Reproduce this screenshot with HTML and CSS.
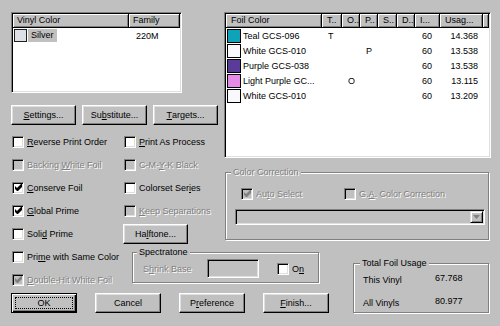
FILE: index.html
```html
<!DOCTYPE html>
<html lang="en">

<head>
    <meta charset="UTF-8">
    <title>Foil Settings</title>
    <link rel="stylesheet" href="styles.css">
</head>

<body>
    <div class="dialog">
        <div class="top">
            <div class="left">
                <!-- vinyl list -->
                <div class="list vinyl-list">
                    <div class="list-head">
                        <div class="hcell">Vinyl Color</div>
                        <div class="hcell">Family</div>
                    </div>
                    <div class="list-row">
                        <div class="name"><span class="swatch silver"></span><span class="sel">Silver</span></div>
                        <div class="cell">220M</div>
                    </div>
                </div>

                <div class="top-buttons">
                    <div class="btn"><u>S</u>ettings...</div>
                    <div class="btn">Su<u>b</u>stitute...</div>
                    <div class="btn"><u>T</u>argets...</div>
                </div>

                <div class="options">
                    <div class="check"><span class="box"></span><span><u>R</u>everse Print Order</span></div>
                    <div class="check"><span class="box"></span><span><u>P</u>rint As Process</span></div>
                    <div class="check disabled"><span class="box off"></span><span>Backing <u>W</u>hite Foil</span></div>
                    <div class="check disabled"><span class="box off"></span><span>C-M-<u>Y</u>-K Black</span></div>
                    <div class="check"><span class="box"><svg class="tick" width="7" height="7" viewBox="0 0 7 7"><polygon points="0,2 2,4 6,0 7,0 7,3 3,7 2,7 0,5"/></svg></span><span><u>C</u>onserve Foil</span></div>
                    <div class="check"><span class="box"></span><span>Colorset Ser<u>i</u>es</span></div>
                    <div class="check"><span class="box"><svg class="tick" width="7" height="7" viewBox="0 0 7 7"><polygon points="0,2 2,4 6,0 7,0 7,3 3,7 2,7 0,5"/></svg></span><span><u>G</u>lobal Prime</span></div>
                    <div class="check disabled"><span class="box off"></span><span><u>K</u>eep Separations</span></div>
                    <div class="check"><span class="box"></span><span>Soli<u>d</u> Prime</span></div>
                    <div class="btn halftone">Ha<u>l</u>ftone...</div>
                </div>
            </div>

            <div class="right">
                <!-- foil list -->
                <div class="list foil-list">
                    <div class="list-head">
                        <div class="hcell">Foil Color</div>
                        <div class="hcell">T..</div>
                        <div class="hcell">O..</div>
                        <div class="hcell">P..</div>
                        <div class="hcell">S..</div>
                        <div class="hcell">D..</div>
                        <div class="hcell">I...</div>
                        <div class="hcell">Usag...</div>
                        <div class="hcell"></div>
                    </div>
                    <div class="list-row">
                        <div class="name"><span class="swatch teal"></span>Teal GCS-096</div>
                        <div class="cell">T</div>
                        <div class="cell"></div>
                        <div class="cell"></div>
                        <div class="cell"></div>
                        <div class="cell"></div>
                        <div class="cell num">60</div>
                        <div class="cell usage">14.368</div>
                    </div>
                    <div class="list-row">
                        <div class="name"><span class="swatch white"></span>White GCS-010</div>
                        <div class="cell"></div>
                        <div class="cell"></div>
                        <div class="cell">P</div>
                        <div class="cell"></div>
                        <div class="cell"></div>
                        <div class="cell num">60</div>
                        <div class="cell usage">13.538</div>
                    </div>
                    <div class="list-row">
                        <div class="name"><span class="swatch purple"></span>Purple GCS-038</div>
                        <div class="cell"></div>
                        <div class="cell"></div>
                        <div class="cell"></div>
                        <div class="cell"></div>
                        <div class="cell"></div>
                        <div class="cell num">60</div>
                        <div class="cell usage">13.538</div>
                    </div>
                    <div class="list-row">
                        <div class="name"><span class="swatch light-purple"></span>Light Purple GC...</div>
                        <div class="cell"></div>
                        <div class="cell">O</div>
                        <div class="cell"></div>
                        <div class="cell"></div>
                        <div class="cell"></div>
                        <div class="cell num">60</div>
                        <div class="cell usage">13.115</div>
                    </div>
                    <div class="list-row">
                        <div class="name"><span class="swatch white"></span>White GCS-010</div>
                        <div class="cell"></div>
                        <div class="cell"></div>
                        <div class="cell"></div>
                        <div class="cell"></div>
                        <div class="cell"></div>
                        <div class="cell num">60</div>
                        <div class="cell usage">13.209</div>
                    </div>
                </div>

                <div class="group cc">
                    <div class="group-title disabled">Color Correction</div>
                    <div class="cc-row">
                        <div class="check disabled auto"><span class="box off"><svg class="tick" width="7" height="7" viewBox="0 0 7 7"><polygon points="0,2 2,4 6,0 7,0 7,3 3,7 2,7 0,5"/></svg></span><span>Au<u>t</u>o Select</span></div>
                        <div class="check disabled"><span class="box off"></span><span>G.<u>A</u>. Color Correction</span></div>
                    </div>
                    <div class="select">
                        <div class="select-btn"><svg width="7" height="4" viewBox="0 0 7 4"><polygon points="0,0 7,0 3.5,4" fill="#808080"/></svg></div>
                    </div>
                </div>
            </div>
        </div>

        <div class="bottom">
            <div class="bottom-left">
                <div class="bottom-opts">
                    <div class="check same"><span class="box"></span><span>Pri<u>m</u>e with Same Color</span></div>
                    <div class="check disabled double"><span class="box off"><svg class="tick" width="7" height="7" viewBox="0 0 7 7"><polygon points="0,2 2,4 6,0 7,0 7,3 3,7 2,7 0,5"/></svg></span><span><u>D</u>ouble-Hit White Foil</span></div>
                    <div class="group spectra">
                        <div class="group-title">Spectratone</div>
                        <span class="shrink-label disabled">S<u>h</u>rink Base</span>
                        <span class="field"></span>
                        <div class="check"><span class="box"></span><span>O<u>n</u></span></div>
                    </div>
                </div>
                <div class="main-buttons">
                    <div class="btn default"><span class="focus">OK</span></div>
                    <div class="btn">Cancel</div>
                    <div class="btn">P<u>r</u>eference</div>
                    <div class="btn"><u>F</u>inish...</div>
                </div>
            </div>

            <div class="group total">
                <div class="group-title">Total Foil Usage</div>
                <div>This Vinyl</div>
                <div class="val">67.768</div>
                <div>All Vinyls</div>
                <div class="val">80.977</div>
            </div>
        </div>
    </div>
</body>

</html>
```

FILE: styles.css
```css
body {
    margin: 0;
    width: 500px;
    height: 326px;
    overflow: hidden;
    background: #c0c0c0;
    font-family: "Liberation Sans", Arial, sans-serif;
    font-size: 9px;
    color: #000;
}

u {
    text-decoration-thickness: 1px;
}

.dialog {
    padding: 12px 0 0 11px;
}

.top {
    display: flex;
    height: 233px;
}

.left {
    width: 213px;
}

.right {
    width: 267px;
}

/* sunken list views */
.list {
    box-sizing: border-box;
    background: #fff;
    border: 1px solid;
    border-color: #808080 #fff #fff #808080;
    box-shadow: inset 1px 1px #000, inset -1px -1px #dfdfdf;
    padding: 1px;
    overflow: hidden;
}

.vinyl-list {
    width: 171px;
    height: 81px;
}

.foil-list {
    width: 267px;
    height: 146px;
}

.list-head,
.list-row {
    display: grid;
}

.vinyl-list .list-head,
.vinyl-list .list-row {
    grid-template-columns: 116px 51px;
}

.foil-list .list-head,
.foil-list .list-row {
    grid-template-columns: 96px 20px 18px 18px 19px 18px 25px 43px 6px;
}

.hcell {
    box-sizing: border-box;
    height: 14px;
    line-height: 13px;
    padding-left: 4px;
    background: #c0c0c0;
    border-right: 1px solid #000;
    border-bottom: 1px solid #000;
    box-shadow: inset 1px 1px #fff, inset -1px -1px #808080;
    white-space: nowrap;
    overflow: hidden;
}

.foil-list .hcell {
    padding-left: 5px;
}

.list-row {
    height: 15px;
    align-items: center;
}

.cell {
    padding-left: 6px;
    white-space: nowrap;
}

.vinyl-list .cell {
    padding-left: 7px;
}

.cell.num {
    padding-left: 7px;
}

.cell.usage {
    text-align: right;
    padding: 0 5px 0 0;
}

.name {
    display: flex;
    align-items: center;
    padding-left: 1px;
    white-space: nowrap;
}

.swatch {
    box-sizing: border-box;
    width: 14px;
    height: 14px;
    margin-right: 2px;
    border: 1px solid #000;
    flex: none;
}

.swatch.silver {
    width: 13px;
    height: 13px;
    margin-right: 1px;
    background: #dde1e6;
    border-color: #202020;
}

.swatch.teal {
    background: #0fa3ba;
}

.swatch.white {
    background: #f9f8fd;
}

.swatch.purple {
    background: #5b3b99;
}

.swatch.light-purple {
    background: #e58ae6;
}

.sel {
    background: #c0c0c0;
    padding: 1px 3px 2px 3px;
}

/* buttons */
.btn {
    box-sizing: border-box;
    width: 66px;
    height: 20px;
    display: flex;
    align-items: center;
    justify-content: center;
    border: 1px solid;
    border-color: #fff #000 #000 #fff;
    box-shadow: inset -1px -1px #808080, inset 1px 1px #dfdfdf;
    white-space: nowrap;
}

.btn.default {
    border: 1px solid #000;
    box-shadow: inset 1px 1px #fff, inset -1px -1px #000, inset -2px -2px #808080;
}

.focus {
    flex: 1;
    align-self: stretch;
    margin: 3px;
    border: 1px dotted #000;
    display: flex;
    align-items: center;
    justify-content: center;
}

.top-buttons {
    margin-top: 12px;
    display: flex;
    gap: 6px;
}

.top-buttons .btn {
    width: 65px;
}

/* checkboxes */
.options {
    margin-top: 5px;
    display: grid;
    grid-template-columns: 112px 101px;
    grid-auto-rows: 23px;
}

.check {
    display: flex;
    align-items: center;
    white-space: nowrap;
}

.box {
    box-sizing: border-box;
    width: 12px;
    height: 12px;
    margin: 0 3px 0 1px;
    flex: none;
    display: flex;
    align-items: center;
    justify-content: center;
    background: #fff;
    border: 1px solid;
    border-color: #808080 #fff #fff #808080;
    box-shadow: inset 1px 1px #000, inset -1px -1px #dfdfdf;
}

.box.off {
    background: #c0c0c0;
}

.tick {
    fill: #000;
}

.disabled {
    color: #808080;
    text-shadow: 1px 1px 0 #fff;
}

.disabled .tick {
    fill: #808080;
}

.halftone {
    width: 65px;
    align-self: center;
}

/* group boxes */
.group {
    position: relative;
    box-sizing: border-box;
    border: 1px solid #808080;
    box-shadow: inset 1px 1px #fff, 1px 1px #fff;
}

.group-title {
    position: absolute;
    top: -6px;
    left: 5px;
    padding: 0 2px;
    line-height: 11px;
    background: #c0c0c0;
    white-space: nowrap;
}

.cc {
    margin: 14px 0 0 1px;
    width: 264px;
    height: 68px;
    padding: 12px 0 0 9px;
}

.cc-row {
    display: flex;
    height: 17px;
    align-items: center;
    padding-left: 5px;
}

.cc-row .auto {
    width: 103px;
}

.select {
    box-sizing: border-box;
    margin-top: 7px;
    width: 250px;
    height: 16px;
    padding: 1px;
    display: flex;
    justify-content: flex-end;
    background: #c0c0c0;
    border: 1px solid;
    border-color: #808080 #fff #fff #808080;
    box-shadow: inset 1px 1px #000, inset -1px -1px #dfdfdf;
}

.select-btn {
    box-sizing: border-box;
    width: 13px;
    display: flex;
    align-items: center;
    justify-content: center;
    border: 1px solid;
    border-color: #dfdfdf #000 #000 #dfdfdf;
    box-shadow: inset 1px 1px #fff, inset -1px -1px #808080;
}

/* bottom area */
.bottom {
    display: flex;
}

.bottom-left {
    width: 342px;
}

.bottom-opts {
    display: grid;
    grid-template-columns: 121px 187px;
    grid-template-rows: 23px 23px;
}

.same {
    grid-column: 1;
    grid-row: 1;
}

.double {
    grid-column: 1;
    grid-row: 2;
}

.spectra {
    grid-column: 2;
    grid-row: 1 / span 2;
    margin-top: 7px;
    height: 31px;
    padding: 2px 0 0 10px;
    display: flex;
    align-items: center;
}

.spectra .group-title {
    left: 4px;
}

.shrink-label {
    width: 64px;
}

.field {
    box-sizing: border-box;
    width: 52px;
    height: 19px;
    margin-right: 17px;
    background: #c0c0c0;
    border: 1px solid;
    border-color: #808080 #fff #fff #808080;
    box-shadow: inset 1px 1px #000, inset -1px -1px #dfdfdf;
}

.main-buttons {
    margin-top: 2px;
    display: flex;
    gap: 18px;
}

.total {
    margin-top: 18px;
    width: 136px;
    height: 50px;
    padding: 4px 0 0 9px;
    display: grid;
    grid-template-columns: 72px auto;
    grid-auto-rows: 23px;
    align-items: center;
}

.total .group-title {
    left: 6px;
}

.val {
    padding-bottom: 4px;
}
```
